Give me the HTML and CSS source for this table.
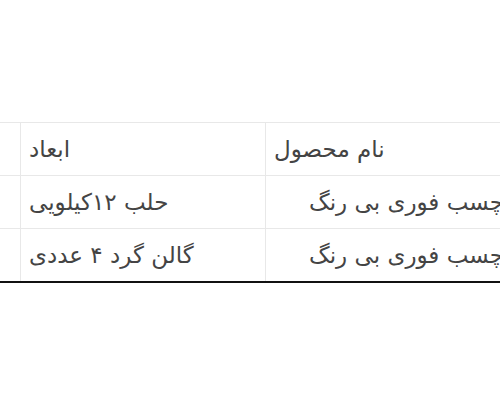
FILE: index.html
```html
<!DOCTYPE html>
<html lang="fa">
<head>
<meta charset="utf-8">
<link rel="stylesheet" href="styles.css">
</head>
<body>
<div class="scroller">
  <table class="products">
    <thead>
      <tr>
        <th class="col-a"></th>
        <th class="col-dim" dir="rtl">ابعاد</th>
        <th class="col-name" dir="rtl">نام محصول</th>
      </tr>
    </thead>
    <tbody>
      <tr>
        <td class="col-a"></td>
        <td class="col-dim" dir="rtl">حلب ۱۲کیلویی</td>
        <td class="col-name" dir="rtl">چسب فوری بی رنگ</td>
      </tr>
      <tr>
        <td class="col-a"></td>
        <td class="col-dim" dir="rtl">گالن گرد ۴ عددی</td>
        <td class="col-name" dir="rtl">چسب فوری بی رنگ</td>
      </tr>
    </tbody>
  </table>
</div>
</body>
</html>
```

FILE: styles.css
```css
html, body {
  margin: 0;
  padding: 0;
  background: #fff;
  overflow: hidden;
}
.scroller {
  padding-top: 122px;
  overflow: hidden;
  width: 500px;
}
.products {
  border-collapse: collapse;
  table-layout: fixed;
  width: 612px;
  margin-left: -100px;
  font-family: "DejaVu Sans", "Noto Sans", sans-serif;
  font-size: 23px;
  color: #444;
}
.products th,
.products td {
  border: 1px solid #e8e8e8;
  height: 53px;
  padding: 0 8px;
  font-weight: normal;
  white-space: nowrap;
  text-align: left;
  box-sizing: border-box;
  overflow: hidden;
}
.products tr:last-child td {
  border-bottom: 2px solid #111;
}
.col-a { width: 120px; }
.col-dim { width: 245px; }
.col-name { width: 247px; }
.products td.col-name { text-align: right; }
.products th.col-name { text-align: left; }
```
